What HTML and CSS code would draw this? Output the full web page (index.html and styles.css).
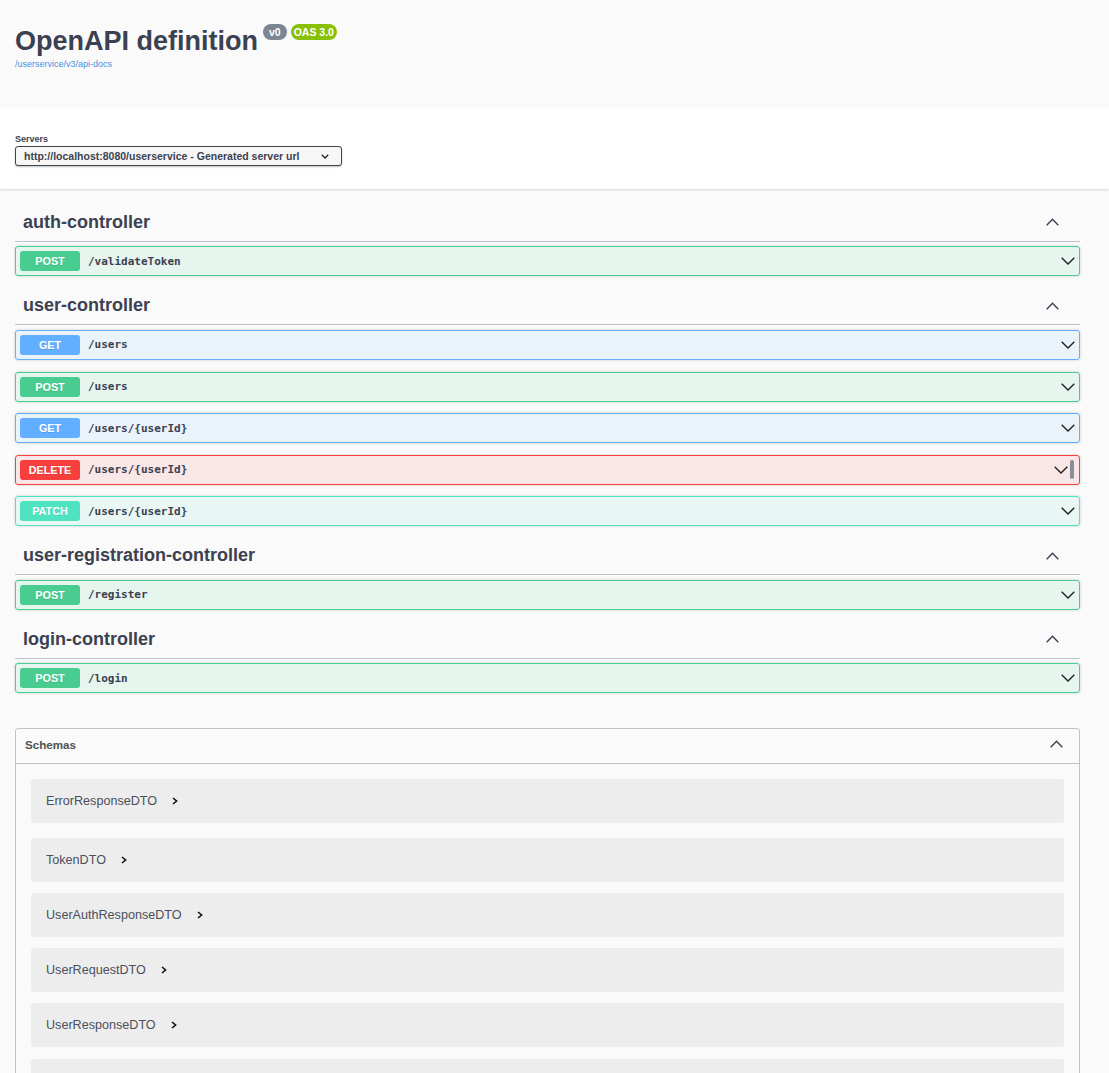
FILE: index.html
```html
<!DOCTYPE html>
<html lang="en">
<head>
<meta charset="utf-8">
<title>Swagger UI</title>
<link rel="stylesheet" href="styles.css">
</head>
<body>
<div class="wrapper">
  <div class="info">
    <h2 class="title"><span>OpenAPI definition</span><span class="badge badge-version">v0</span><span class="badge badge-oas">OAS 3.0</span></h2>
    <a class="url" href="#">/userservice/v3/api-docs</a>
  </div>
</div>

<div class="scheme">
  <div class="wrapper">
    <label class="servers-title">Servers</label>
    <div class="select">
      <span>http://localhost:8080/userservice - Generated server url</span>
      <svg class="select-arrow" width="8" height="5" viewBox="0 0 8 5"><polyline points="0.8,0.8 4,4 7.2,0.8" fill="none" stroke="#222" stroke-width="1.3"/></svg>
    </div>
  </div>
</div>

<div class="wrapper ops">
  <section class="tag">
    <h3 class="tag-head"><span>auth-controller</span><svg width="13" height="8" viewBox="0 0 13 8"><polyline points="0.7,7.3 6.5,1.2 12.3,7.3" fill="none" stroke="#3b4151" stroke-width="1.4"/></svg></h3>
    <div class="opblock post"><span class="method">POST</span><span class="path">/validateToken</span><svg class="chev" width="14" height="8" viewBox="0 0 14 8"><polyline points="0.7,0.7 7,6.9 13.3,0.7" fill="none" stroke="#222" stroke-width="1.4"/></svg></div>
  </section>

  <section class="tag">
    <h3 class="tag-head"><span>user-controller</span><svg width="13" height="8" viewBox="0 0 13 8"><polyline points="0.7,7.3 6.5,1.2 12.3,7.3" fill="none" stroke="#3b4151" stroke-width="1.4"/></svg></h3>
    <div class="opblock get"><span class="method">GET</span><span class="path">/users</span><svg class="chev" width="14" height="8" viewBox="0 0 14 8"><polyline points="0.7,0.7 7,6.9 13.3,0.7" fill="none" stroke="#222" stroke-width="1.4"/></svg></div>
    <div class="opblock post"><span class="method">POST</span><span class="path">/users</span><svg class="chev" width="14" height="8" viewBox="0 0 14 8"><polyline points="0.7,0.7 7,6.9 13.3,0.7" fill="none" stroke="#222" stroke-width="1.4"/></svg></div>
    <div class="opblock get"><span class="method">GET</span><span class="path">/users/{userId}</span><svg class="chev" width="14" height="8" viewBox="0 0 14 8"><polyline points="0.7,0.7 7,6.9 13.3,0.7" fill="none" stroke="#222" stroke-width="1.4"/></svg></div>
    <div class="opblock delete"><span class="method">DELETE</span><span class="path">/users/{userId}</span><svg class="chev" width="14" height="8" viewBox="0 0 14 8"><polyline points="0.7,0.7 7,6.9 13.3,0.7" fill="none" stroke="#222" stroke-width="1.4"/></svg><span class="grip"></span></div>
    <div class="opblock patch"><span class="method">PATCH</span><span class="path">/users/{userId}</span><svg class="chev" width="14" height="8" viewBox="0 0 14 8"><polyline points="0.7,0.7 7,6.9 13.3,0.7" fill="none" stroke="#222" stroke-width="1.4"/></svg></div>
  </section>

  <section class="tag">
    <h3 class="tag-head"><span>user-registration-controller</span><svg width="13" height="8" viewBox="0 0 13 8"><polyline points="0.7,7.3 6.5,1.2 12.3,7.3" fill="none" stroke="#3b4151" stroke-width="1.4"/></svg></h3>
    <div class="opblock post"><span class="method">POST</span><span class="path">/register</span><svg class="chev" width="14" height="8" viewBox="0 0 14 8"><polyline points="0.7,0.7 7,6.9 13.3,0.7" fill="none" stroke="#222" stroke-width="1.4"/></svg></div>
  </section>

  <section class="tag">
    <h3 class="tag-head"><span>login-controller</span><svg width="13" height="8" viewBox="0 0 13 8"><polyline points="0.7,7.3 6.5,1.2 12.3,7.3" fill="none" stroke="#3b4151" stroke-width="1.4"/></svg></h3>
    <div class="opblock post"><span class="method">POST</span><span class="path">/login</span><svg class="chev" width="14" height="8" viewBox="0 0 14 8"><polyline points="0.7,0.7 7,6.9 13.3,0.7" fill="none" stroke="#222" stroke-width="1.4"/></svg></div>
  </section>

  <section class="models">
    <h4 class="models-head"><span>Schemas</span><svg width="13" height="8" viewBox="0 0 13 8"><polyline points="0.7,7.3 6.5,1.2 12.3,7.3" fill="none" stroke="#3b4151" stroke-width="1.4"/></svg></h4>
    <div class="models-body">
      <div class="model first"><span class="model-title">ErrorResponseDTO</span><svg class="model-arrow" width="6" height="8" viewBox="0 0 6 8"><polyline points="1,1 4.6,4 1,7" fill="none" stroke="#111" stroke-width="1.6"/></svg></div>
      <div class="model"><span class="model-title">TokenDTO</span><svg class="model-arrow" width="6" height="8" viewBox="0 0 6 8"><polyline points="1,1 4.6,4 1,7" fill="none" stroke="#111" stroke-width="1.6"/></svg></div>
      <div class="model"><span class="model-title">UserAuthResponseDTO</span><svg class="model-arrow" width="6" height="8" viewBox="0 0 6 8"><polyline points="1,1 4.6,4 1,7" fill="none" stroke="#111" stroke-width="1.6"/></svg></div>
      <div class="model"><span class="model-title">UserRequestDTO</span><svg class="model-arrow" width="6" height="8" viewBox="0 0 6 8"><polyline points="1,1 4.6,4 1,7" fill="none" stroke="#111" stroke-width="1.6"/></svg></div>
      <div class="model"><span class="model-title">UserResponseDTO</span><svg class="model-arrow" width="6" height="8" viewBox="0 0 6 8"><polyline points="1,1 4.6,4 1,7" fill="none" stroke="#111" stroke-width="1.6"/></svg></div>
      <div class="model"></div>
    </div>
  </section>
</div>
</body>
</html>
```
FILE: styles.css
```css
* { box-sizing: border-box; }

body {
  margin: 0;
  background: #fafafa;
  font-family: "Liberation Sans", Arial, sans-serif;
  color: #3b4151;
}

.wrapper {
  padding: 0 29px 0 15px;
}

/* info */
.info {
  padding: 25px 0 37px;
}

.title {
  display: flex;
  align-items: flex-start;
  margin: 0;
  font-size: 27px;
  line-height: 33px;
  font-weight: 700;
  color: #3b4151;
}

.badge {
  margin-top: -1px;
  height: 16px;
  border-radius: 8px;
  font-size: 10.5px;
  line-height: 16px;
  font-weight: 700;
  color: #fff;
}

.badge-version {
  margin-left: 5px;
  padding: 0 6px;
  background: #7d8492;
}

.badge-oas {
  margin-left: 4px;
  padding: 0 3px;
  background: #89bf04;
}

.url {
  display: block;
  margin-top: 1px;
  font-size: 9px;
  line-height: 11px;
  color: #4990e2;
  text-decoration: none;
}

/* servers */
.scheme {
  background: #fff;
  box-shadow: 0 1px 2px 0 rgba(0, 0, 0, .15);
  padding: 27px 0 23px;
  margin-bottom: 15.4px;
}

.servers-title {
  display: block;
  margin-bottom: 1px;
  font-size: 9px;
  line-height: 11px;
  font-weight: 700;
  color: #3b4151;
}

.select {
  display: flex;
  align-items: center;
  justify-content: space-between;
  width: 327px;
  height: 20px;
  padding: 0 12px 0 8px;
  border: 1px solid #41444e;
  border-radius: 3px;
  background: #f7f7f7;
  box-shadow: 0 1px 2px 0 rgba(0, 0, 0, .25);
  font-size: 10.5px;
  font-weight: 700;
  color: #3b4151;
}

/* operations */
.ops {
  display: flex;
  flex-direction: column;
}

.tag {
  display: flex;
  flex-direction: column;
}

.tag-head {
  display: flex;
  align-items: center;
  justify-content: space-between;
  height: 37.4px;
  margin: 0 0 4.6px;
  padding: 0 21px 1px 8px;
  border-bottom: 1px solid rgba(59, 65, 81, .3);
  font-size: 18px;
  font-weight: 700;
  color: #3b4151;
}

.opblock {
  display: flex;
  align-items: center;
  height: 30px;
  margin-bottom: 11.6px;
  padding: 0 4px;
  border: 1px solid;
  border-radius: 3px;
  box-shadow: 0 0 3px rgba(0, 0, 0, .19);
}

.method {
  width: 60px;
  height: 20px;
  border-radius: 3px;
  font-size: 10.8px;
  line-height: 20px;
  font-weight: 700;
  text-align: center;
  color: #fff;
  text-shadow: 0 1px 0 rgba(0, 0, 0, .1);
}

.path {
  flex: 1;
  padding: 0 8px;
  font-family: "DejaVu Sans Mono", "Liberation Mono", monospace;
  font-size: 11px;
  font-weight: 600;
  color: #3b4151;
}

.chev { flex: none; }

.grip {
  width: 4px;
  height: 19px;
  margin: 0 1px 0 2px;
  border-radius: 2px;
  background: #8b8e98;
}

.post { border-color: #49cc90; background: rgba(73, 204, 144, .1); }
.post .method { background: #49cc90; }
.get { border-color: #61affe; background: rgba(97, 175, 254, .1); }
.get .method { background: #61affe; }
.delete { border-color: #f93e3e; background: rgba(249, 62, 62, .1); }
.delete .method { background: #f93e3e; }
.patch { border-color: #50e3c2; background: rgba(80, 227, 194, .1); }
.patch .method { background: #50e3c2; }

/* schemas */
.models {
  margin-top: 22.8px;
  border: 1px solid rgba(59, 65, 81, .3);
  border-radius: 3px;
}

.models-head {
  display: flex;
  align-items: center;
  justify-content: space-between;
  height: 35px;
  margin: 0;
  padding: 0 16px 3px 9px;
  border-bottom: 1px solid rgba(59, 65, 81, .3);
  font-size: 11.6px;
  font-weight: 700;
  color: #505050;
}

.models-body {
  padding: 15px 15px 30px;
}

.model {
  display: flex;
  align-items: center;
  height: 44px;
  margin-bottom: 11.2px;
  padding-left: 15px;
  border-radius: 3px;
  background: rgba(0, 0, 0, .05);
}

.model.first { margin-bottom: 15px; }

.model-title {
  font-size: 12.6px;
  color: #4a4f5c;
}

.model-arrow {
  margin-left: 15px;
}
```
